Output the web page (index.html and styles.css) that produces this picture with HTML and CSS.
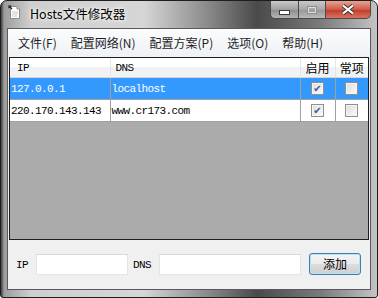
FILE: index.html
```html
<!DOCTYPE html>
<html lang="zh-CN">
<head>
    <meta charset="UTF-8">
    <title>Hosts文件修改器</title>
    <link rel="stylesheet" href="styles.css">
</head>
<body>
    <div class="window">
        <div class="titlebar">
            <svg class="app-icon" width="13" height="15" viewBox="0 0 13 15">
                <path d="M2.5 1.5 H9 L11.5 4 V13.5 H2.5 Z" fill="#fff" stroke="#8a8a8a"/>
                <path d="M9 1.5 V4 H11.5" fill="#ddd" stroke="#8a8a8a"/>
                <path d="M0.5 0.5 L4 4 M0.5 3 L3 0.5" stroke="#222" stroke-width="1.2"/>
                <path d="M4 7 H10 M4 9 H10 M4 11 H9" stroke="#c8c8c8"/>
            </svg>
            <span class="title">Hosts文件修改器</span>
            <div class="controls">
                <span class="ctl min"><i></i></span>
                <span class="ctl max"><i></i></span>
                <span class="ctl close">
                    <svg width="14" height="11" viewBox="0 0 14 11">
                        <path d="M2 1.5 L12 9.5 M12 1.5 L2 9.5" stroke="#3a3a3a" stroke-width="4"/>
                        <path d="M2 1.5 L12 9.5 M12 1.5 L2 9.5" stroke="#fff" stroke-width="2.2"/>
                    </svg>
                </span>
            </div>
        </div>

        <div class="client">
            <ul class="menubar">
                <li>文件(F)</li>
                <li>配置网络(N)</li>
                <li>配置方案(P)</li>
                <li>选项(O)</li>
                <li>帮助(H)</li>
            </ul>

            <div class="grid">
                <table>
                    <colgroup>
                        <col class="w-ip">
                        <col class="w-dns">
                        <col class="w-on">
                        <col class="w-fix">
                    </colgroup>
                    <thead>
                        <tr>
                            <th class="col-ip">IP</th>
                            <th class="col-dns">DNS</th>
                            <th class="col-chk">启用</th>
                            <th class="col-chk">常项</th>
                        </tr>
                    </thead>
                    <tbody>
                        <tr class="selected">
                            <td>127.0.0.1</td>
                            <td>localhost</td>
                            <td class="chk"><span class="box on">✔</span></td>
                            <td class="chk"><span class="box"></span></td>
                        </tr>
                        <tr>
                            <td>220.170.143.143</td>
                            <td>www.cr173.com</td>
                            <td class="chk"><span class="box on">✔</span></td>
                            <td class="chk"><span class="box"></span></td>
                        </tr>
                    </tbody>
                </table>
            </div>

            <div class="form">
                <label class="lbl">IP</label>
                <input class="field ip" type="text">
                <label class="lbl dns-lbl">DNS</label>
                <input class="field dns" type="text">
                <button class="add">添加</button>
            </div>
        </div>
    </div>
</body>
</html>
```

FILE: styles.css
```css
body {
    margin: 0;
    padding: 0;
    background-color: #fff;
    font-family: "Noto Sans CJK SC", sans-serif;
}

.window {
    width: 378px;
    height: 298px;
    box-sizing: border-box;
    border: 1px solid #1e1e1e;
    border-radius: 7px 7px 3px 3px;
    padding: 0 6px 7px 6px;
    display: flex;
    flex-direction: column;
    background: linear-gradient(to right, #3c3c3c 0px, #9c9c9c 3px, #cfcfcf 30px, #d6d6d6 38%, #8a8a8a 55%, #4a4a4a 68%, #7a7a7a 85%, #c4c4c4 100%);
}

/* 标题栏 */
.titlebar {
    height: 27px;
    display: flex;
    align-items: flex-start;
}
.app-icon {
    margin: 4px 0 0 1px;
}
.title {
    margin: 4px 0 0 9px;
    font-size: 12.5px;
    line-height: 18px;
    color: #000;
    text-shadow: 0 0 6px #fff, 0 0 3px #fff;
}
.controls {
    margin-left: auto;
    display: flex;
}
.ctl {
    height: 18px;
    box-sizing: border-box;
    border: 1px solid #4a4a4a;
    border-top: none;
    display: flex;
    align-items: center;
    justify-content: center;
}
.ctl.min {
    width: 28px;
    border-radius: 0 0 0 5px;
    border-right: none;
    background: linear-gradient(#c9c9c9, #a0a0a0 50%, #8c8c8c 51%, #b4b4b4);
}
.ctl.min i {
    width: 9px;
    height: 3px;
    margin-top: 6px;
    background: #fff;
    border: 1px solid #3a3a3a;
}
.ctl.max {
    width: 27px;
    border-right: none;
    background: linear-gradient(#c9c9c9, #a8a8a8 50%, #969696 51%, #bababa);
}
.ctl.max i {
    width: 8px;
    height: 6px;
    border: 1px solid #8e8e8e;
    box-shadow: inset 0 0 0 1px #dcdcdc;
}
.ctl.close {
    width: 46px;
    border-radius: 0 0 5px 0;
    background: linear-gradient(#e8a493, #cf5a48 50%, #c03a27 51%, #d8735e);
}

/* 客户区 */
.client {
    flex: 1;
    display: flex;
    flex-direction: column;
    border: 1px solid #5a5a5a;
    background-color: #f0f0f0;
}

.menubar {
    list-style: none;
    margin: 0;
    padding: 0 0 0 4px;
    height: 28px;
    display: flex;
    align-items: center;
    gap: 2px;
    background: linear-gradient(#fbfcfd, #eef1f5);
}
.menubar li {
    padding: 0 6px;
    font-size: 12px;
    color: #1e1e1e;
    line-height: 16px;
}

.grid {
    margin: 0 1px;
    height: 183px;
    box-sizing: border-box;
    border: 1px solid #1f1f1f;
    background-color: #ababab;
}
.grid table {
    width: 358px;
    border-collapse: collapse;
    table-layout: fixed;
    font-family: "Liberation Mono", monospace;
    font-size: 11px;
    letter-spacing: -0.6px;
}
.w-ip { width: 100px; }
.w-dns { width: 190px; }
.w-on { width: 35px; }
.w-fix { width: 33px; }

.grid th {
    height: 19px;
    padding: 0;
    font-weight: normal;
    text-align: left;
    color: #000;
    background: linear-gradient(#ffffff, #ffffff 45%, #f1f2f4 50%, #f1f2f4);
    border-right: 1px solid #e3e5e8;
    border-bottom: 1px solid #d5d5d5;
}
.grid th.col-ip { padding-left: 7px; }
.grid th.col-dns { padding-left: 5px; }
.grid th.col-chk {
    text-align: center;
    font-family: "Noto Sans CJK SC", sans-serif;
    font-size: 12px;
    letter-spacing: 0;
}
.grid th:last-child { border-right: none; }

.grid td {
    height: 21px;
    padding: 0 0 0 1px;
    background-color: #fff;
    color: #000;
    border-right: 1px solid #a0a0a0;
    border-bottom: 1px solid #a0a0a0;
    white-space: nowrap;
    overflow: hidden;
}
.grid td:last-child { border-right: none; }
.grid tr.selected td {
    background-color: #3399ff;
    color: #fff;
}
.grid td.chk {
    padding: 0;
    text-align: center;
}

.box {
    display: inline-block;
    width: 13px;
    height: 13px;
    box-sizing: border-box;
    border: 1px solid #8f8f8f;
    background: linear-gradient(135deg, #dcdcdc, #fbfbfb);
    box-shadow: inset 0 0 0 1px #f4f4f4;
    vertical-align: middle;
    font-family: "DejaVu Sans", sans-serif;
    font-size: 10px;
    line-height: 11px;
    color: #3e57a0;
    letter-spacing: 0;
}

/* 底部输入区 */
.form {
    flex: 1;
    display: flex;
    align-items: center;
    padding-left: 8px;
    font-family: "Liberation Mono", monospace;
    font-size: 11px;
    letter-spacing: -0.6px;
}
.lbl {
    color: #000;
}
.field {
    margin: 0;
    height: 21px;
    box-sizing: border-box;
    border: 1px solid #e1e5ea;
    border-top-color: #d5d9de;
    background-color: #fff;
    padding: 0 2px;
}
.field.ip {
    width: 92px;
    margin-left: 8px;
}
.dns-lbl {
    margin-left: 5px;
}
.field.dns {
    width: 142px;
    margin-left: 8px;
}
.add {
    margin: -2px 0 0 8px;
    width: 52px;
    height: 22px;
    box-sizing: border-box;
    border: 1px solid #3c7fb1;
    border-radius: 3px;
    background: linear-gradient(#f4f4f4, #ebebeb 50%, #dddddd 51%, #cfcfcf);
    box-shadow: inset 0 0 0 1px #b9e2f7;
    font-family: "Noto Sans CJK SC", sans-serif;
    font-size: 12px;
    letter-spacing: 0;
    color: #000;
    padding: 0;
}
```
